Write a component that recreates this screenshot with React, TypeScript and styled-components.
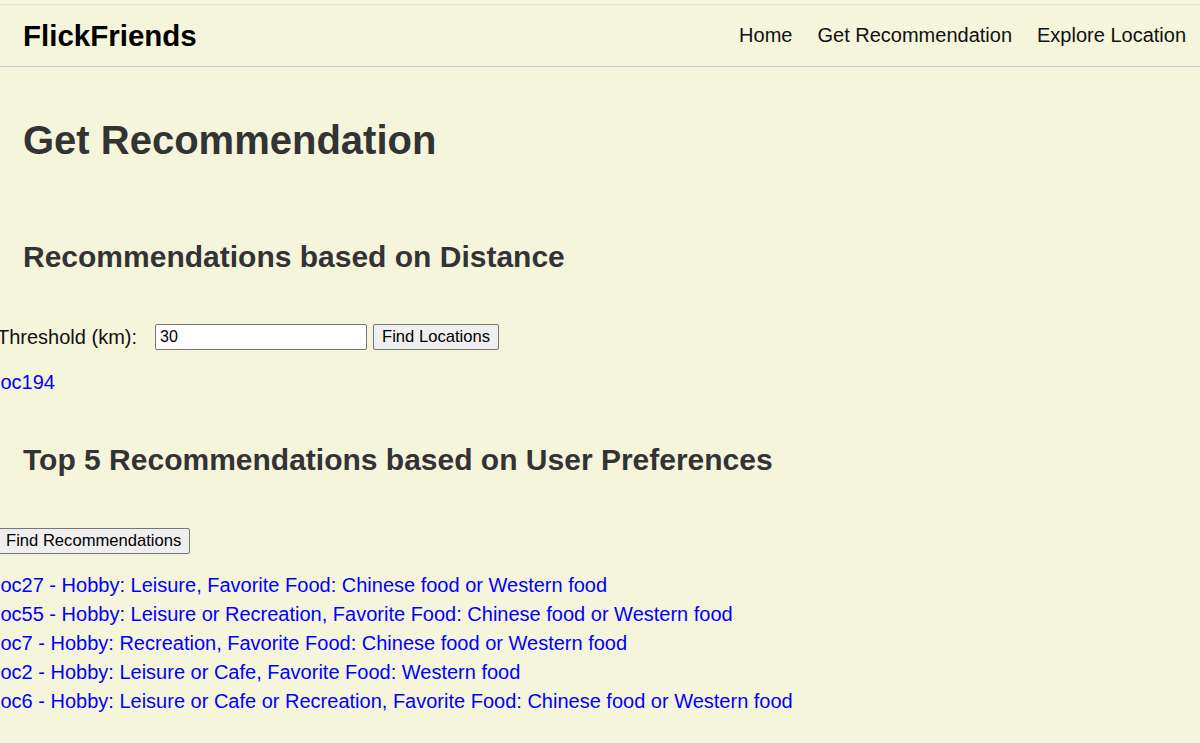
import React, { useState } from 'react';
import styled, { createGlobalStyle } from 'styled-components';

const GlobalStyle = createGlobalStyle`
  html, body {
    margin: 0;
    padding: 0;
    background-color: #f5f5dc;
    font-family: "Liberation Sans", Arial, sans-serif;
  }
  body {
    overflow-x: hidden;
  }
`;

const NavBar = styled.header`
  margin-top: 4px;
  height: 61px;
  border-top: 1px solid #dddddd;
  border-bottom: 1px solid #cccccc;
  display: flex;
  align-items: center;
  justify-content: space-between;
  padding: 0 14px 0 23px;
`;

const Logo = styled.div`
  font-size: 29.5px;
  font-weight: bold;
  color: #000;
`;

const NavLinks = styled.nav`
  display: flex;
  gap: 25px;
`;

const NavLink = styled.a`
  font-size: 20px;
  color: #111;
  text-decoration: none;
  cursor: pointer;
`;

const Main = styled.main`
  padding-top: 50px;
`;

const Title = styled.h1`
  margin: 0 0 0 23px;
  font-size: 40px;
  line-height: 46px;
  color: #333;
`;

const SectionHeading = styled.h2<{ $top: number }>`
  margin: ${(p) => p.$top}px 0 0 23px;
  font-size: 30px;
  line-height: 34px;
  color: #333;
`;

const Controls = styled.div<{ $top: number }>`
  margin: ${(p) => p.$top}px 0 0 -3px;
  display: flex;
  align-items: center;
`;

const Label = styled.label`
  font-size: 20px;
  color: #111;
  margin-right: 18px;
`;

const TextInput = styled.input`
  box-sizing: border-box;
  width: 212px;
  height: 26px;
  padding: 2px 4px;
  border: 1px solid #767676;
  border-radius: 2px;
  background: #fff;
  font-family: "Liberation Sans", Arial, sans-serif;
  font-size: 16px;
  color: #000;
  margin-right: 6px;
`;

const Button = styled.button`
  box-sizing: border-box;
  height: 26px;
  padding: 0 8px;
  border: 1px solid #767676;
  border-radius: 2px;
  background: #efefef;
  font-family: "Liberation Sans", Arial, sans-serif;
  font-size: 16.6px;
  color: #000;
  cursor: pointer;
`;

const Results = styled.ul<{ $top: number }>`
  list-style: none;
  margin: ${(p) => p.$top}px 0 0 -4px;
  padding: 0;
`;

const ResultItem = styled.li`
  font-size: 20px;
  line-height: 29px;
  color: #0000ff;
  white-space: nowrap;
`;

const recommendations = [
  { id: 'loc27', hobby: 'Leisure', food: 'Chinese food or Western food' },
  { id: 'loc55', hobby: 'Leisure or Recreation', food: 'Chinese food or Western food' },
  { id: 'loc7', hobby: 'Recreation', food: 'Chinese food or Western food' },
  { id: 'loc2', hobby: 'Leisure or Cafe', food: 'Western food' },
  { id: 'loc6', hobby: 'Leisure or Cafe or Recreation', food: 'Chinese food or Western food' },
];

const App: React.FC = () => {
  const [threshold, setThreshold] = useState('30');

  return (
    <>
      <GlobalStyle />
      <NavBar>
        <Logo>FlickFriends</Logo>
        <NavLinks>
          <NavLink>Home</NavLink>
          <NavLink>Get Recommendation</NavLink>
          <NavLink>Explore Location</NavLink>
        </NavLinks>
      </NavBar>
      <Main>
        <Title>Get Recommendation</Title>

        <SectionHeading $top={77}>Recommendations based on Distance</SectionHeading>
        <Controls $top={50}>
          <Label htmlFor="threshold">Threshold (km):</Label>
          <TextInput
            id="threshold"
            value={threshold}
            onChange={(e) => setThreshold(e.target.value)}
          />
          <Button>Find Locations</Button>
        </Controls>
        <Results $top={18}>
          <ResultItem>loc194</ResultItem>
        </Results>

        <SectionHeading $top={46}>Top 5 Recommendations based on User Preferences</SectionHeading>
        <Controls $top={51}>
          <Button>Find Recommendations</Button>
        </Controls>
        <Results $top={17}>
          {recommendations.map((r) => (
            <ResultItem key={r.id}>
              {r.id} - Hobby: {r.hobby}, Favorite Food: {r.food}
            </ResultItem>
          ))}
        </Results>
      </Main>
    </>
  );
};

export default App;
